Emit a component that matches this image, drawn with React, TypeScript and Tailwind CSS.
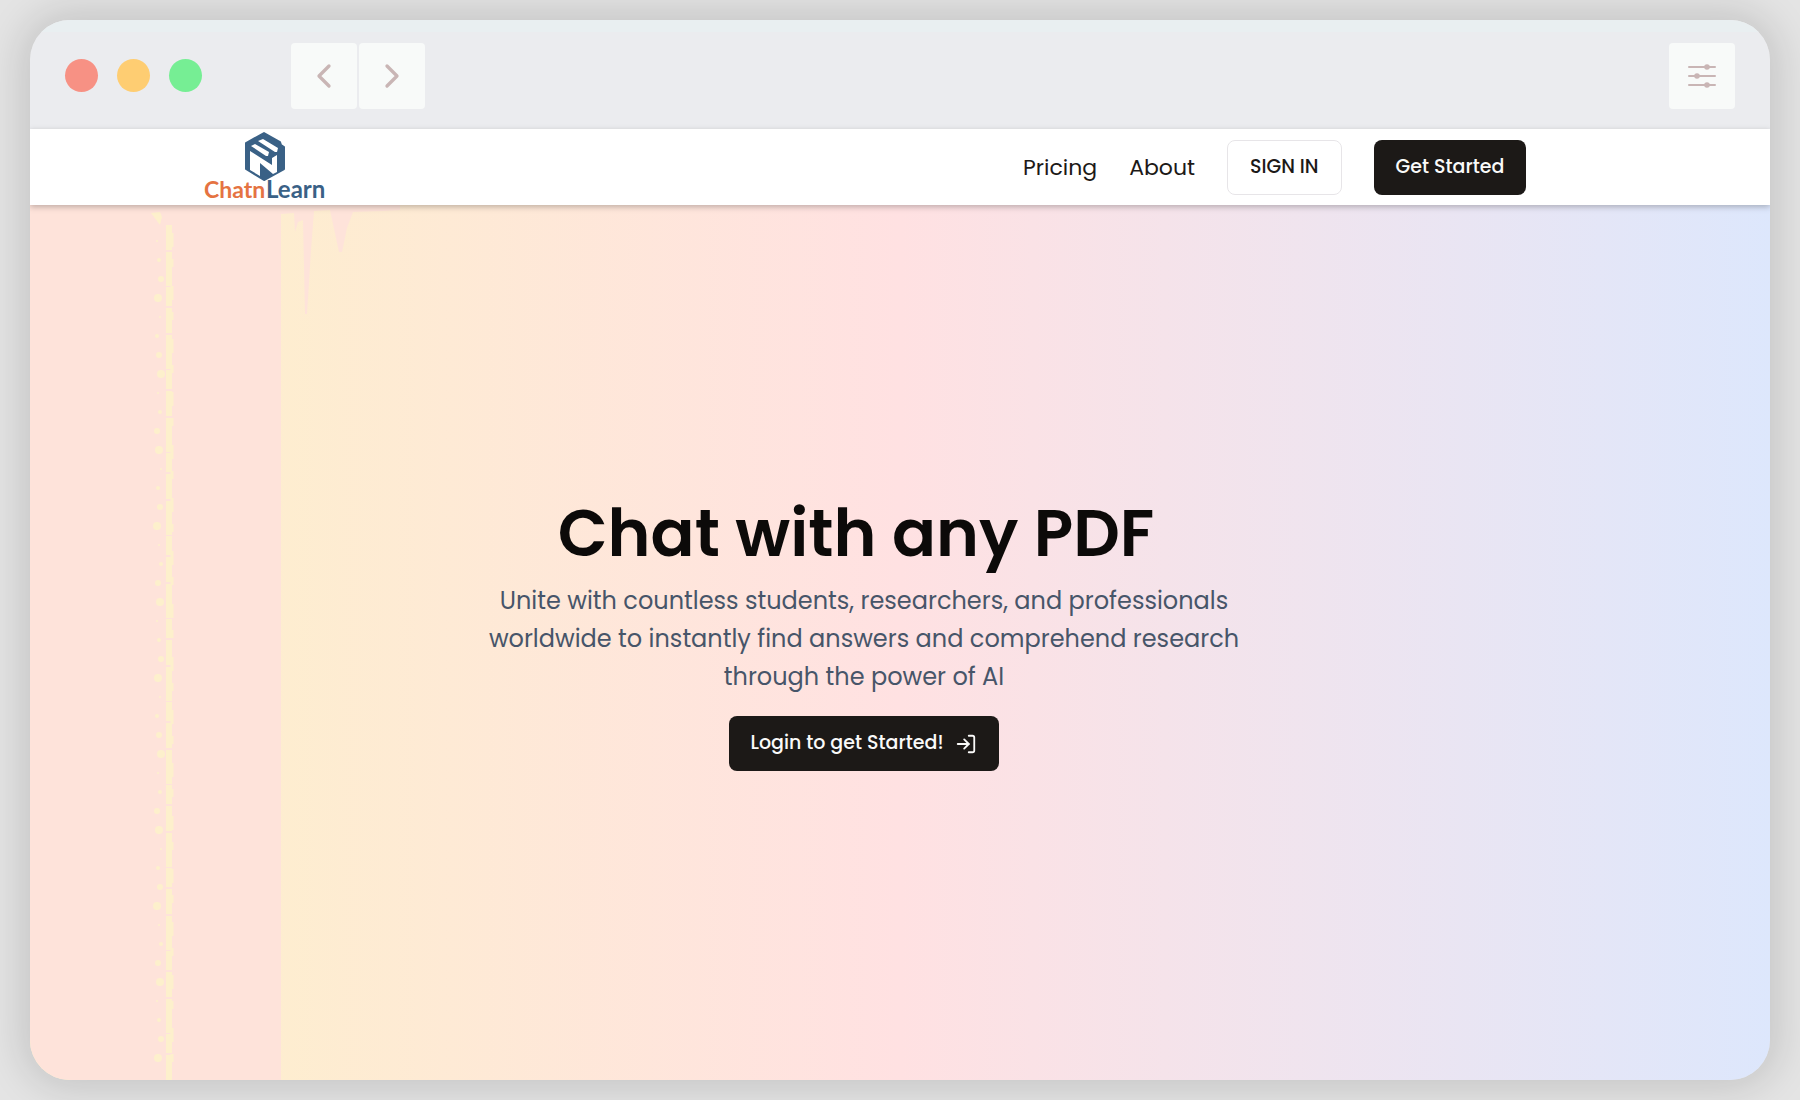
import { ChevronLeft, ChevronRight, LogIn } from "lucide-react";

const SPECKS = Array.from({ length: 44 }, (_, i) => ({
  y: 36 + i * 19,
  x: 127 + ((i * 7) % 5),
  r: 1 + ((i * 5) % 4),
}));

function Logo() {
  return (
    <a href="#" aria-label="Home" className="flex shrink-0">
      <svg viewBox="0 0 126 72" className="h-[72px] w-[126px]">
        <path
          d="M60 2L76 11l1 3 3 2v22L60 49 42 38V12z"
          fill="#3a6186"
          stroke="#3a6186"
          strokeWidth="2"
          strokeLinejoin="round"
        />
        <path d="M54 10l5-2 15 9-1 4h-2zM47 15l4-2 14 8-1 4h-2z" fill="#fff" />
        <path d="M46 20l22 14v-7l5-3v17l-4 2-13-11v13l-10-6z" fill="#fff" />
        <text x="0" y="67" fontSize="23" fontWeight="700" fill="#e57342" fontFamily="Lato, sans-serif">
          Chatn
        </text>
        <text x="62" y="67" fontSize="24" fontWeight="700" fill="#3a6186" fontFamily="Lato, sans-serif">
          Learn
        </text>
      </svg>
    </a>
  );
}

function TitleBar() {
  return (
    <header className="flex h-[109px] items-center border-t-12 border-[#e9eff1] bg-[#ebecef] px-[35px] pb-[10px]">
      <div className="flex gap-[19px]">
        <span className="size-[33px] rounded-full bg-[#f79184]" />
        <span className="size-[33px] rounded-full bg-[#fecd72]" />
        <span className="size-[33px] rounded-full bg-[#76ee94]" />
      </div>
      <div className="ml-[89px] flex gap-0.5 text-[#c9b5b5]">
        <button
          type="button"
          aria-label="Back"
          className="flex size-[66px] items-center justify-center rounded-sm bg-[#f8faf9]"
        >
          <ChevronLeft className="size-10" strokeWidth={2} />
        </button>
        <button
          type="button"
          aria-label="Forward"
          className="flex size-[66px] items-center justify-center rounded-sm bg-[#f8faf9]"
        >
          <ChevronRight className="size-10" strokeWidth={2} />
        </button>
      </div>
      <button
        type="button"
        aria-label="Settings"
        className="ml-auto flex size-[66px] items-center justify-center rounded-sm bg-[#f8faf9]"
      >
        <svg viewBox="0 0 28 24" className="h-6 w-7" stroke="#c9b5b5" strokeWidth="2" strokeLinecap="round" fill="#c9b5b5">
          <path d="M1 3h26M1 12h26M1 21h26" />
          <circle cx="19" cy="3" r="1.8" />
          <circle cx="9" cy="12" r="1.8" />
          <circle cx="19" cy="21" r="1.8" />
        </svg>
      </button>
    </header>
  );
}

function Nav() {
  return (
    <nav className="relative z-10 flex h-[76px] items-center justify-between bg-white pl-[10%] pr-[14%] shadow-[0_2px_6px_rgba(0,0,0,0.25)]">
      <Logo />
      <div className="flex items-center gap-8 text-[#1c1917]">
        <a href="#pricing" className="text-[22px]">
          Pricing
        </a>
        <a href="#about" className="text-[22px]">
          About
        </a>
        <button type="button" className="h-[55px] rounded-lg border border-[#e7e5e8] px-[22px] text-[19px] font-medium">
          SIGN IN
        </button>
        <button type="button" className="h-[55px] rounded-lg bg-[#1c1917] px-[22px] text-[19px] font-medium text-[#fafaf9]">
          Get Started
        </button>
      </div>
    </nav>
  );
}

// Peach panel with the torn yellow edge that sits behind the hero copy
function Backdrop() {
  return (
    <svg className="absolute inset-0 h-full w-full" aria-hidden="true">
      <rect width="251" height="100%" fill="#fee3da" />
      <path
        d="M251 0H370V5L352 6 323 7 317 23 312 47 309 47 300 5 284 6 281 45 277 109 275 109 273 15 268 17 265 27 264 8 251 9z"
        fill="#fee3da"
      />
      <g fill="#fdf0cc">
        <path d="M121 8l9-1 2 5-2 8z" />
        {SPECKS.map((s) => (
          <circle key={s.y} cx={s.x} cy={s.y} r={s.r} />
        ))}
      </g>
      <line x1="139" y1="20" x2="139" y2="100%" stroke="#fdf0cc" strokeWidth="6" strokeDasharray="25 2 34 1 19 2" />
      <line x1="142" y1="28" x2="142" y2="100%" stroke="#fdf0cc" strokeWidth="3" strokeDasharray="14 12 8 19" />
    </svg>
  );
}

function Hero() {
  return (
    <main className="relative flex flex-1 flex-col bg-linear-to-r from-[#fdf2c8] via-[#ffe1e2] to-[#dde7fc]">
      <Backdrop />
      <div className="relative flex flex-1 flex-col items-center justify-center pr-[72px] pb-5 text-center">
        <h1 className="mr-4 text-[65px] leading-[80px] font-semibold text-[#0c0a09]">Chat with any PDF</h1>
        <p className="mt-2 max-w-[780px] text-[24px] leading-[38px] text-[#475569]">
          Unite with countless students, researchers, and professionals worldwide to instantly find answers and
          comprehend research through the power of AI
        </p>
        <button
          type="button"
          className="mt-5 flex h-[55px] items-center gap-3 rounded-lg bg-[#1c1917] px-[22px] text-[19px] font-medium text-[#fafaf9]"
        >
          Login to get Started!
          <LogIn className="size-[22px]" />
        </button>
      </div>
    </main>
  );
}

export default function App() {
  return (
    <div className="flex min-h-screen bg-[#e4e4e4] px-[30px] py-5 font-['Poppins','Inter',sans-serif]">
      <div className="flex flex-1 flex-col overflow-hidden rounded-[40px] shadow-[0_0_40px_8px_rgba(0,0,0,0.14)]">
        <TitleBar />
        <Nav />
        <Hero />
      </div>
    </div>
  );
}
